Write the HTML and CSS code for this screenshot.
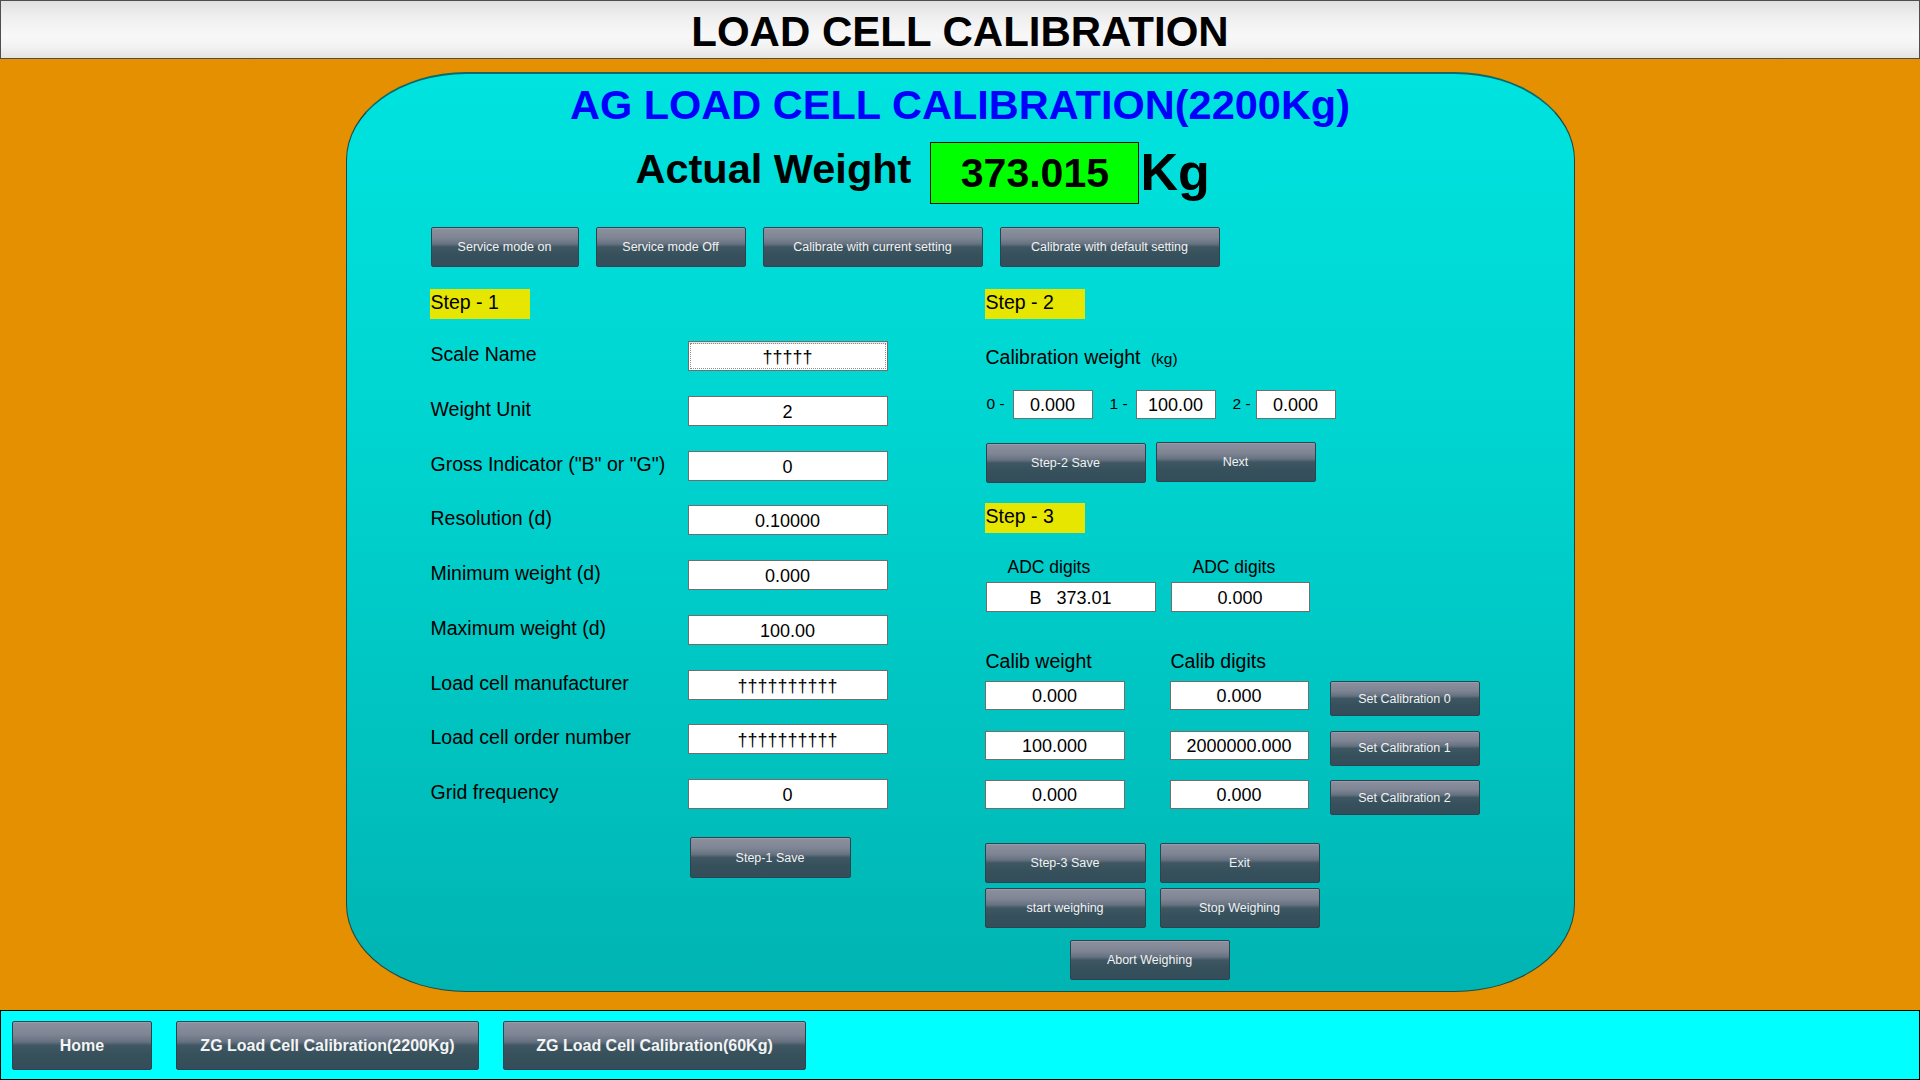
FILE: index.html
```html
<!DOCTYPE html>
<html lang="en">
<head>
<meta charset="utf-8">
<title>LOAD CELL CALIBRATION</title>
<link rel="stylesheet" href="styles.css">
</head>
<body>
<div class="screen">
  <header class="topbar"><h1>LOAD CELL CALIBRATION</h1></header>
  <main class="stage">
    <section class="panel">
      <h2 class="panel-title">AG LOAD CELL CALIBRATION(2200Kg)</h2>
      <div class="weight-row">
        <span class="weight-label">Actual Weight</span>
        <span class="weight-value">373.015</span>
        <span class="weight-unit">Kg</span>
      </div>
      <div class="mode-row">
        <button class="btn w148">Service mode on</button>
        <button class="btn w150">Service mode Off</button>
        <button class="btn w220">Calibrate with current setting</button>
        <button class="btn w220">Calibrate with default setting</button>
      </div>
      <div class="columns">
        <div class="col-left">
          <div class="step">Step - 1</div>
          <div class="form-grid">
            <div class="lbl">Scale Name</div><div class="field focus">†††††</div>
            <div class="lbl">Weight Unit</div><div class="field">2</div>
            <div class="lbl">Gross Indicator ("B" or "G")</div><div class="field">0</div>
            <div class="lbl">Resolution (d)</div><div class="field">0.10000</div>
            <div class="lbl">Minimum weight (d)</div><div class="field">0.000</div>
            <div class="lbl">Maximum weight (d)</div><div class="field">100.00</div>
            <div class="lbl">Load cell manufacturer</div><div class="field">††††††††††</div>
            <div class="lbl">Load cell order number</div><div class="field">††††††††††</div>
            <div class="lbl">Grid frequency</div><div class="field">0</div>
          </div>
          <button class="btn save1">Step-1 Save</button>
        </div>
        <div class="col-right">
          <div class="step">Step - 2</div>
          <div class="calw">Calibration weight <span class="unit">(kg)</span></div>
          <div class="calw-row">
            <span class="idx">0 -</span><div class="field f80">0.000</div>
            <span class="idx">1 -</span><div class="field f80">100.00</div>
            <span class="idx last">2 -</span><div class="field f80">0.000</div>
          </div>
          <div class="step2-btns">
            <button class="btn w160">Step-2 Save</button>
            <button class="btn w160 up1">Next</button>
          </div>
          <div class="step step3">Step - 3</div>
          <div class="adc-grid">
            <div class="adc-lbl">ADC digits</div>
            <div class="adc-lbl">ADC digits</div>
            <div class="field adc1">B   373.01</div>
            <div class="field">0.000</div>
          </div>
          <div class="calib-head">
            <span class="ch1">Calib weight</span>
            <span class="ch2">Calib digits</span>
          </div>
          <div class="calib-row">
            <div class="field f140">0.000</div>
            <div class="field f140 c2">0.000</div>
            <button class="btn setcal">Set Calibration 0</button>
          </div>
          <div class="calib-row">
            <div class="field f140">100.000</div>
            <div class="field f140 c2">2000000.000</div>
            <button class="btn setcal">Set Calibration 1</button>
          </div>
          <div class="calib-row">
            <div class="field f140">0.000</div>
            <div class="field f140 c2">0.000</div>
            <button class="btn setcal">Set Calibration 2</button>
          </div>
          <div class="action-grid">
            <button class="btn">Step-3 Save</button>
            <button class="btn">Exit</button>
            <button class="btn">start weighing</button>
            <button class="btn">Stop Weighing</button>
          </div>
          <button class="btn abort">Abort Weighing</button>
        </div>
      </div>
    </section>
  </main>
  <footer class="navbar">
    <button class="btn nav w140">Home</button>
    <button class="btn nav w303">ZG Load Cell Calibration(2200Kg)</button>
    <button class="btn nav w303">ZG Load Cell Calibration(60Kg)</button>
  </footer>
</div>
</body>
</html>
```
FILE: styles.css
```css
* { box-sizing: border-box; }
html, body { margin: 0; padding: 0; }
body {
  width: 1920px;
  height: 1080px;
  overflow: hidden;
  font-family: "Liberation Sans", Arial, sans-serif;
  background: #e49000;
  color: #000;
}
.screen { display: flex; flex-direction: column; height: 1080px; }

/* top header */
.topbar {
  height: 59px;
  border: 1px solid #4e4e4e;
  background: linear-gradient(to bottom, #e0e0e0 0%, #eeeeee 25%, #f8f8f8 60%, #f2f2f2 80%, #e4e4e4 100%);
  text-align: center;
  padding-top: 5px;
}
.topbar h1 { margin: 0; font-size: 42px; font-weight: bold; line-height: 52px; }

/* orange stage */
.stage { flex: 1; background: #e49000; padding-top: 13px; }

.panel {
  width: 1229px;
  height: 920px;
  margin: 0 auto;
  border: 1px solid #1b4848;
  border-top: 2px solid #0a6a6a;
  border-radius: 120px / 88px;
  background: linear-gradient(to bottom, #00e3df 0%, #00d4d0 40%, #00b4b2 100%);
}
.panel-title {
  margin: 7px 0 0;
  text-align: center;
  font-size: 41.5px;
  line-height: 48px;
  font-weight: bold;
  color: #0000ff;
}

.weight-row { display: flex; align-items: flex-start; margin-top: 13px; padding-left: 289px; height: 62px; }
.weight-label { font-size: 41.5px; font-weight: bold; line-height: 48px; margin-top: 3px; }
.weight-value {
  width: 209px; height: 62px; margin-left: 19px;
  background: #00ff00; border: 1px solid #101010;
  font-size: 41px; font-weight: bold; line-height: 60px; text-align: center;
}
.weight-unit { font-size: 52px; font-weight: bold; line-height: 60px; margin-left: 1px; }

/* buttons */
.btn {
  display: flex; align-items: center; justify-content: center;
  height: 40px; padding: 0; margin: 0;
  border: 1px solid #2a4450; border-radius: 2px;
  background: linear-gradient(to bottom, #8c909e 0%, #7f8594 26%, #667280 42%, #3f5763 50%, #36505c 70%, #334e5a 100%);
  color: #f2f2f2;
  font-family: "Liberation Sans", Arial, sans-serif;
  font-size: 12.5px;
  box-shadow: inset 0 1px 0 rgba(255,255,255,0.12);
}
.w148 { width: 148px; }
.w150 { width: 150px; }
.w220 { width: 220px; }
.w160 { width: 160px; }
.w140 { width: 140px; }
.w303 { width: 303px; }

.mode-row { display: flex; gap: 17px; margin-top: 23px; padding-left: 84px; }

.columns { display: flex; align-items: flex-start; margin-top: 22px; padding-left: 83px; }
.col-left { width: 555px; }
.col-right { width: 520px; }

.step {
  width: 100px; height: 30px;
  background: #e6e600;
  font-size: 19.5px; line-height: 27px;
  padding-left: 1px;
}

.form-grid {
  display: grid;
  grid-template-columns: 258px 200px;
  grid-auto-rows: 30px;
  row-gap: 24.75px;
  margin-top: 22px;
}
.lbl { font-size: 19.5px; line-height: 27px; padding-left: 1px; white-space: nowrap; }

.field {
  height: 30px;
  border: 1px solid #6e6e6e;
  background: #fff;
  text-align: center;
  font-size: 18px;
  line-height: 28px;
  padding-top: 1px;
  white-space: pre;
  color: #000;
}
.field.focus { outline: 1px dotted #8a8a8a; outline-offset: -3px; box-shadow: inset 0 2px 0 #e6e6e6; }

.save1 { width: 161px; height: 41px; margin: 28px 0 0 260px; }

/* step 2 */
.calw { margin-top: 25.5px; font-size: 19.5px; line-height: 24px; padding-left: 1px; }
.calw .unit { font-size: 15.5px; margin-left: 5px; }
.calw-row { display: flex; align-items: center; margin-top: 19px; padding-left: 2px; }
.idx { font-size: 15.5px; width: 26px; }
.idx.last { width: 23px; }
.idx + .field { margin-right: 17px; }
.f80 { width: 80px; height: 29px; line-height: 27px; }
.step2-btns { display: flex; gap: 10px; margin-top: 24px; padding-left: 1px; }
.up1 { position: relative; top: -1px; }

.step3 { margin-top: 20.5px; }

.adc-grid {
  display: grid;
  grid-template-columns: 170px 139px;
  column-gap: 15px;
  margin-top: 24px;
  padding-left: 1px;
}
.adc-lbl { font-size: 17.5px; line-height: 20px; padding-left: 22px; margin-bottom: 5px; }

.calib-head { display: flex; margin-top: 37px; font-size: 19.5px; line-height: 24px; }
.ch1 { width: 186px; padding-left: 1px; }
.calib-row { display: flex; align-items: flex-start; margin-top: 8px; }
.calib-row + .calib-row { margin-top: 14.5px; }
.f140 { width: 140px; height: 29px; line-height: 27px; }
.c2 { margin-left: 45px; width: 139px; }
.setcal { width: 150px; height: 35px; margin-left: 21px; }

.action-grid {
  display: grid;
  grid-template-columns: 161px 160px;
  grid-auto-rows: 40px;
  column-gap: 14px;
  row-gap: 5px;
  margin-top: 28px;
}
.abort { width: 160px; margin: 12px 0 0 85px; }

/* bottom nav */
.navbar {
  height: 70px;
  background: #00ffff;
  border: 1px solid #000;
  display: flex;
  gap: 24px;
  padding: 10px 0 0 11px;
}
.btn.nav { height: 49px; font-size: 16px; font-weight: bold; color: #f4f4f4; }
```
